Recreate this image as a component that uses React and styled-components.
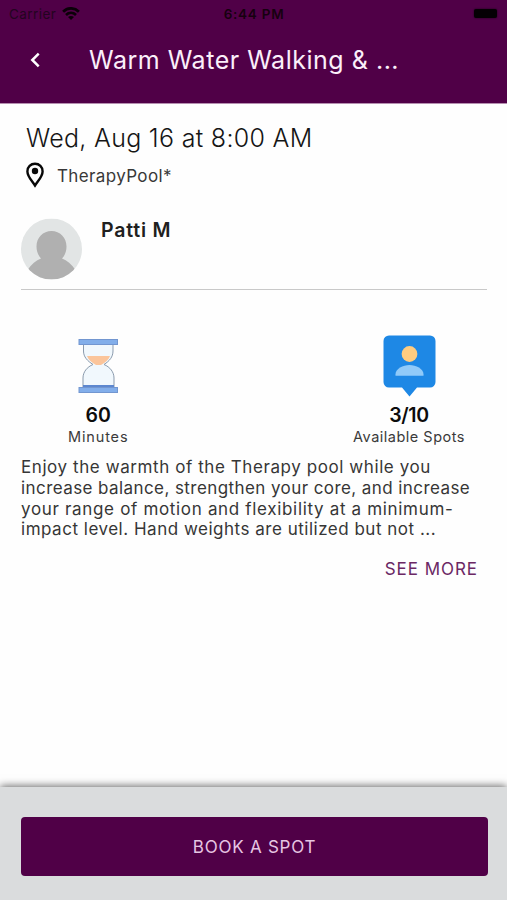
import React from 'react';
import styled, { createGlobalStyle } from 'styled-components';

const GlobalStyle = createGlobalStyle`
  *, *::before, *::after { box-sizing: border-box; }
  body { margin: 0; background: #fefefe; }
  button { font: inherit; border: 0; padding: 0; background: none; cursor: pointer; }
  svg { display: block; flex: none; }
`;

const Screen = styled.div`
  height: 900px;
  display: flex;
  flex-direction: column;
  overflow: hidden;
  background: #fefefe;
  color: #252525;
  font-family: Inter, 'Liberation Sans', sans-serif;
  white-space: nowrap;
`;

const Header = styled.header`
  height: 103px;
  flex: none;
  background: #500047;
  box-shadow: 0 1px 0 #b58fb0;
`;

const StatusBar = styled.div`
  height: 28px;
  padding: 0 10px 0 9px;
  display: grid;
  grid-template-columns: 1fr auto 1fr;
  align-items: center;
  color: #16000f;
  font-size: 13.5px;
  line-height: 28px;
`;

const Carrier = styled.div`
  display: flex;
  align-items: center;
  gap: 6px;
  color: #230420;
  letter-spacing: 0.45px;
`;

const Clock = styled.div`
  padding-left: 2px;
  font-weight: 600;
  letter-spacing: 0.75px;
`;

const Battery = styled.div`
  justify-self: end;
  width: 23px;
  height: 9px;
  margin-bottom: 2px;
  border-radius: 2px;
  background: #050004;
  box-shadow: 0 0 2px #180014;
`;

const NavBar = styled.div`
  height: 63px;
  padding-left: 29px;
  display: flex;
  align-items: center;
  color: #fff;
`;

const BackButton = styled.button`
  width: 60px;
  color: inherit;
`;

const Title = styled.h1`
  margin: 0;
  color: #fbeffa;
  font-size: 25px;
  font-weight: 400;
  letter-spacing: 0.52px;
`;

const Content = styled.main`
  flex: 1;
  padding: 20px 20px 0 21px;
`;

const DateLine = styled.h2`
  margin: 0 0 9px 5px;
  height: 30px;
  line-height: 30px;
  font-size: 25px;
  font-weight: 300;
  letter-spacing: 0.3px;
  color: #151515;
`;

const Location = styled.div`
  height: 27px;
  padding-left: 5px;
  display: flex;
  align-items: center;
  gap: 13px;
  font-size: 17px;
  letter-spacing: 0.37px;
  color: #383838;
`;

const Instructor = styled.div`
  margin-top: 29px;
  height: 72px;
  display: flex;
  gap: 19px;
  border-bottom: 1px solid #c9c9c9;
`;

const InstructorName = styled.div`
  height: 24px;
  line-height: 24px;
  font-size: 19.5px;
  font-weight: 600;
  letter-spacing: 0.8px;
  color: #202020;
`;

const Stats = styled.div`
  margin-top: 45px;
  display: flex;
  justify-content: space-between;
  padding: 0 22px 0 47px;
`;

const Stat = styled.div`
  display: flex;
  flex-direction: column;
  align-items: center;
`;

const StatIcon = styled.div`
  height: 68px;
`;

const StatValue = styled.div`
  height: 23px;
  line-height: 24px;
  font-size: 19.5px;
  font-weight: 600;
  letter-spacing: ${(p) => p.$tracking};
  color: #0c0c0c;
`;

const StatLabel = styled.div`
  height: 22px;
  line-height: 22px;
  font-size: 14.5px;
  letter-spacing: ${(p) => p.$tracking};
  color: #3a3a3a;
`;

const Description = styled.p`
  margin: 9px 0 0;
  font-size: 17px;
  line-height: 20.8px;
  color: #363636;
`;

const TextLine = styled.span`
  display: block;
  letter-spacing: ${(p) => p.$tracking};
`;

const SeeMore = styled.button`
  display: block;
  margin: 19px 9px 0 auto;
  height: 20px;
  && {
    font-size: 17px;
    line-height: 20px;
  }
  letter-spacing: 0.95px;
  color: #6b2864;
`;

const Footer = styled.footer`
  height: 113px;
  flex: none;
  padding: 30px 19.5px 24px 20.5px;
  background: #dadcdd;
  box-shadow: 0 -1px 8px rgba(0, 0, 0, 0.6);
`;

const BookButton = styled.button`
  width: 100%;
  height: 59px;
  border-radius: 4px;
  && {
    padding: 1px 0 0 1px;
    background: #500047;
    font-size: 17px;
  }
  letter-spacing: 0.75px;
  color: #e6c5e2;
`;

const WifiIcon = () => (
  <svg width="18" height="14" viewBox="0 0 18 14" fill="none" stroke="#0a0008" strokeWidth="2.7">
    <path d="M1.1 4.700C5.6.2 12.4.2 16.9 4.700" />
    <path d="M4 7.900c3-2.8 7-2.8 10 0" />
    <path d="M9 13.100 6 10.100c1.8-1.6 4.2-1.6 6 0z" fill="#0a0008" stroke="none" />
  </svg>
);

const ChevronIcon = () => (
  <svg width="13" height="16" viewBox="0 0 13 16" fill="none" stroke="#fff" strokeWidth="2.5">
    <path d="M9.7 1.7 3.3 8l6.4 6.3" />
  </svg>
);

const PinIcon = () => (
  <svg width="18" height="27" viewBox="0 0 18 27">
    <path
      d="M9 1.800c-4.3 0-7.600 3.2-7.600 7.600C1.400 14.500 6.200 19 9 23.500c2.800-4.500 7.600-9 7.600-14.100C16.600 5 13.300 1.800 9 1.800z"
      fill="none"
      stroke="#080808"
      strokeWidth="2.4"
    />
    <circle cx="9" cy="9" r="3.2" fill="#080808" />
  </svg>
);

const Avatar = () => (
  <svg width="61" height="62" viewBox="0 -.5 61 62">
    <defs>
      <clipPath id="avatar-clip">
        <circle cx="30.500" cy="30.500" r="30.500" />
      </clipPath>
    </defs>
    <g clipPath="url(#avatar-clip)">
      <rect width="61" height="61" fill="#e2e5e5" />
      <path
        d="M30.500 12.500c-8.500 0-15 6.500-15 15.500 0 5.500 2.200 9.500 4.500 12C15 42 10.500 45.500 6.500 51.500V61h48V51.500C50.500 45.500 46 42 41 40c2.500-2.500 4.500-6.500 4.500-12 0-9-6.500-15.500-15-15.500z"
        fill="#b0b0b0"
      />
    </g>
  </svg>
);

const HourglassIcon = () => (
  <svg width="40" height="62" viewBox="0 0 40 62">
    <path
      d="M5.500 9v7c0 6 4 10 9.500 13.500C9 32 5 37 5 43v10h31V43c0-6-4-11-10-13.500C31.500 26 35 22 35 16V9z"
      fill="#f1f8fd"
      stroke="#8b9bad"
      strokeWidth="1"
    />
    <path d="M9 21h23c-1.500 4-4.500 6.500-9 9h-5c-4.500-2.500-7.500-5-9-9z" fill="#fbc59b" />
    <rect x="5" y="50" width="31" height="3" fill="#5d87cf" />
    <rect x="1" y="4.500" width="38.500" height="5" fill="#82aeea" stroke="#7296d0" />
    <rect x="1" y="52.500" width="38.500" height="5" fill="#82aeea" stroke="#7296d0" />
  </svg>
);

const AttendeeIcon = () => (
  <svg width="53" height="62" viewBox="0 0 53 62">
    <path
      d="M6 .5h41a5.500 5.500 0 0 1 5.500 5.500v41a5.500 5.500 0 0 1-5.500 5.500H34L26.500 61.500 19 52.500H6A5.500 5.500 0 0 1 .5 47V6A5.500 5.500 0 0 1 6 .5z"
      fill="#1e88e5"
    />
    <circle cx="26.500" cy="19" r="7.900" fill="#ffcc80" />
    <path d="M12.500 40.700v-1.500c0-5.400 7.500-9.200 14-9.200s14 3.800 14 9.200v1.500z" fill="#90caf9" />
  </svg>
);

const DESCRIPTION = [
  { text: 'Enjoy the warmth of the Therapy pool while you', tracking: '0.58px' },
  { text: 'increase balance, strengthen your core, and increase', tracking: '0.42px' },
  { text: 'your range of motion and flexibility at a minimum-', tracking: '0.67px' },
  { text: 'impact level. Hand weights are utilized but not ...', tracking: '0.51px' },
];

export default function App() {
  return (
    <Screen>
      <GlobalStyle />
      <Header>
        <StatusBar>
          <Carrier>
            Carrier
            <WifiIcon />
          </Carrier>
          <Clock>6:44 PM</Clock>
          <Battery />
        </StatusBar>
        <NavBar>
          <BackButton aria-label="Back">
            <ChevronIcon />
          </BackButton>
          <Title>Warm Water Walking &amp; ...</Title>
        </NavBar>
      </Header>
      <Content>
        <DateLine>Wed, Aug 16 at 8:00 AM</DateLine>
        <Location>
          <PinIcon />
          TherapyPool*
        </Location>
        <Instructor>
          <Avatar />
          <InstructorName>Patti M</InstructorName>
        </Instructor>
        <Stats>
          <Stat>
            <StatIcon>
              <HourglassIcon />
            </StatIcon>
            <StatValue $tracking="0px">60</StatValue>
            <StatLabel $tracking="0.85px">Minutes</StatLabel>
          </Stat>
          <Stat>
            <StatIcon>
              <AttendeeIcon />
            </StatIcon>
            <StatValue $tracking="-0.4px">3/10</StatValue>
            <StatLabel $tracking="0.5px">Available Spots</StatLabel>
          </Stat>
        </Stats>
        <Description>
          {DESCRIPTION.map((line) => (
            <TextLine key={line.text} $tracking={line.tracking}>
              {line.text}
            </TextLine>
          ))}
        </Description>
        <SeeMore>SEE MORE</SeeMore>
      </Content>
      <Footer>
        <BookButton>BOOK A SPOT</BookButton>
      </Footer>
    </Screen>
  );
}
